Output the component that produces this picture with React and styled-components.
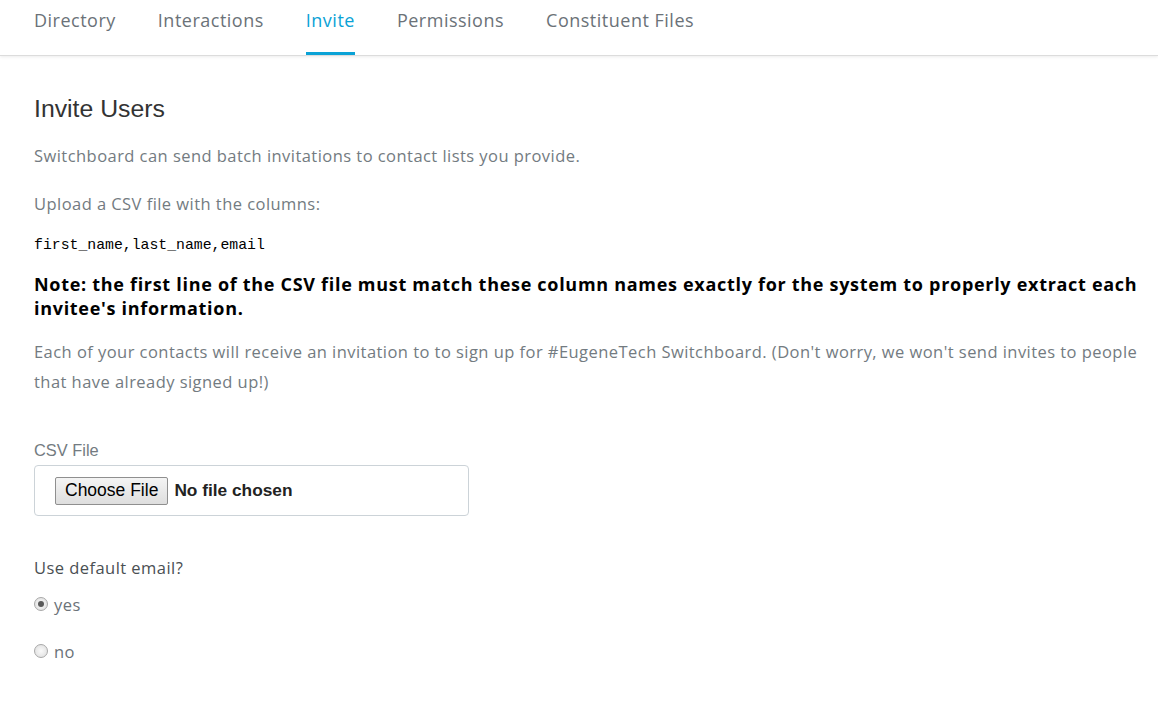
import React, { useState } from "react"
import styled, { createGlobalStyle } from "styled-components"

const GlobalStyle = createGlobalStyle`
  html, body {
    margin: 0;
    padding: 0;
    background: #fff;
  }
  body {
    font-family: "Open Sans", "Liberation Sans", sans-serif;
  }
`

const Header = styled.nav`
  display: flex;
  height: 55px;
  padding: 0 13px;
  border-bottom: 1px solid #dcdcdc;
  box-shadow: 0 1px 3px rgba(0, 0, 0, 0.08);
`

const Tab = styled.a`
  box-sizing: border-box;
  height: 55px;
  margin: 0 21px;
  line-height: 40px;
  font-size: 18px;
  letter-spacing: 0.5px;
  color: ${p => (p.$active ? "#0aa2d6" : "#6b7278")};
  border-bottom: 3px solid ${p => (p.$active ? "#0aa2d6" : "transparent")};
  text-decoration: none;
  cursor: pointer;
`

const Content = styled.main`
  padding: 38px 12px 40px 34px;
`

const Title = styled.h2`
  margin: 0 0 17px;
  font-family: "Liberation Sans", Arial, sans-serif;
  font-weight: normal;
  font-size: 24.8px;
  line-height: 30px;
  color: #333;
`

const Text = styled.p`
  margin: 0 0 ${p => p.$gap || 18}px;
  font-size: 16.5px;
  letter-spacing: 0.45px;
  line-height: 30px;
  color: #737b81;
`

const Code = styled.pre`
  margin: 0 0 17px;
  font-family: "Liberation Mono", monospace;
  font-size: 14.8px;
  line-height: 20px;
  color: #000;
`

const Note = styled.p`
  margin: 0 0 17px;
  font-size: 18px;
  font-weight: 700;
  letter-spacing: 0.7px;
  line-height: 24px;
  color: #000;
`

const Field = styled.div`
  display: flex;
  flex-direction: column;
  gap: 5px;
  margin-top: 43px;
`

const Label = styled.label`
  font-family: "Liberation Sans", Arial, sans-serif;
  font-size: 16.4px;
  line-height: 20px;
  color: #737b81;
`

const FileBox = styled.div`
  box-sizing: border-box;
  width: 435px;
  height: 51px;
  display: flex;
  align-items: center;
  gap: 6px;
  padding: 0 20px;
  border: 1px solid #ccd3d8;
  border-radius: 4px;
`

const FileButton = styled.button`
  font-family: "Liberation Sans", Arial, sans-serif;
  font-size: 17.5px;
  height: 28px;
  padding: 0 9px;
  color: #000;
  background: linear-gradient(#f4f4f4, #dedede);
  border: 1px solid #8f8f8f;
  border-radius: 2px;
`

const FileName = styled.span`
  font-family: "Liberation Sans", Arial, sans-serif;
  font-size: 17.3px;
  font-weight: 700;
  color: #222;
`

const Question = styled.div`
  margin-top: 40px;
  font-size: 16.5px;
  letter-spacing: 0.45px;
  line-height: 24px;
  color: #4a4f53;
`

const RadioGroup = styled.div`
  display: flex;
  flex-direction: column;
  gap: 23px;
  margin-top: 12px;
`

const RadioRow = styled.label`
  display: flex;
  align-items: center;
  gap: 6px;
  height: 24px;
  font-size: 16.5px;
  letter-spacing: 0.45px;
  color: #6b7278;
  cursor: pointer;
`

const RadioDot = styled.span`
  box-sizing: border-box;
  width: 14px;
  height: 14px;
  border-radius: 50%;
  border: 1px solid #a8a8a8;
  background: radial-gradient(circle, #fafafa, #dcdcdc);
  display: flex;
  align-items: center;
  justify-content: center;

  &::after {
    content: "";
    width: 6px;
    height: 6px;
    border-radius: 50%;
    background: ${p => (p.$checked ? "#5a5a5a" : "transparent")};
  }
`

const tabs = ["Directory", "Interactions", "Invite", "Permissions", "Constituent Files"]

export default function App() {
  const [useDefault, setUseDefault] = useState(true)

  return (
    <>
      <GlobalStyle />
      <Header>
        {tabs.map(t => (
          <Tab key={t} $active={t === "Invite"}>{t}</Tab>
        ))}
      </Header>
      <Content>
        <Title>Invite Users</Title>
        <Text>Switchboard can send batch invitations to contact lists you provide.</Text>
        <Text $gap={16}>Upload a CSV file with the columns:</Text>
        <Code>first_name,last_name,email</Code>
        <Note>
          Note: the first line of the CSV file must match these column names exactly for the system to properly extract each invitee's information.
        </Note>
        <Text $gap={0}>
          Each of your contacts will receive an invitation to to sign up for #EugeneTech Switchboard. (Don't worry, we won't send invites to people that have already signed up!)
        </Text>
        <Field>
          <Label>CSV File</Label>
          <FileBox>
            <FileButton>Choose File</FileButton>
            <FileName>No file chosen</FileName>
          </FileBox>
        </Field>
        <Question>Use default email?</Question>
        <RadioGroup>
          <RadioRow onClick={() => setUseDefault(true)}>
            <RadioDot $checked={useDefault} />
            yes
          </RadioRow>
          <RadioRow onClick={() => setUseDefault(false)}>
            <RadioDot $checked={!useDefault} />
            no
          </RadioRow>
        </RadioGroup>
      </Content>
    </>
  )
}
